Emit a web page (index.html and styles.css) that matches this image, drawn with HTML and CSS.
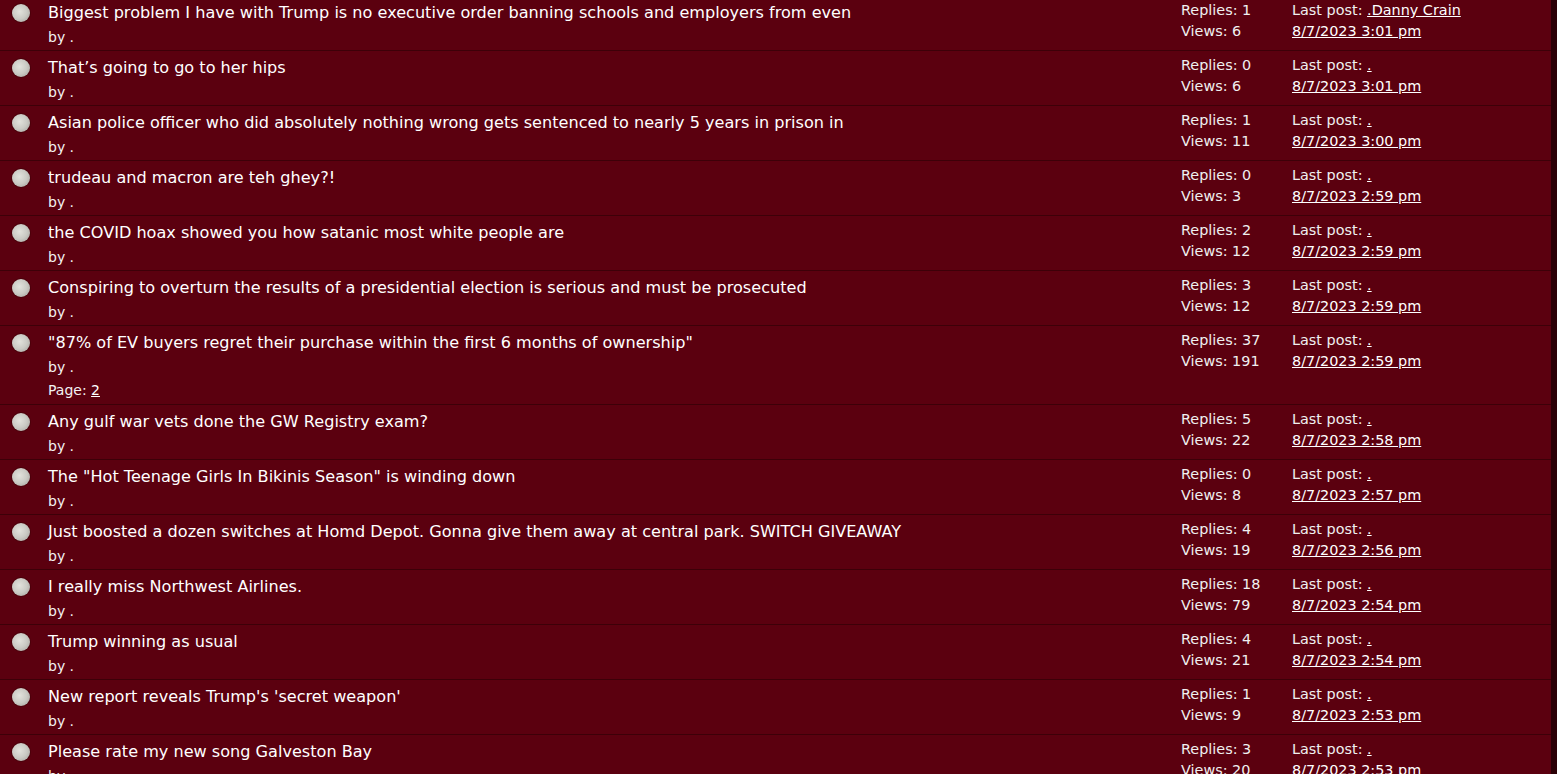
FILE: index.html
```html
<!DOCTYPE html>
<html lang="en">
<head>
    <meta charset="UTF-8">
    <title>Forum topics</title>
    <link rel="stylesheet" href="styles.css">
</head>
<body>
    <div class="page">
        <ul class="topics">
            <li class="topic">
                <span class="dot"></span>
                <div class="subject">
                    <a class="title" href="#">Biggest problem I have with Trump is no executive order banning schools and employers from even</a>
                    <div class="by">by .</div>
                </div>
                <div class="stats"><div>Replies: 1</div><div>Views: 6</div></div>
                <div class="last">
                    <div>Last post: <a href="#">.Danny Crain</a></div>
                    <div><a href="#">8/7/2023 3:01 pm</a></div>
                </div>
            </li>
            <li class="topic">
                <span class="dot"></span>
                <div class="subject">
                    <a class="title" href="#">That’s going to go to her hips</a>
                    <div class="by">by .</div>
                </div>
                <div class="stats"><div>Replies: 0</div><div>Views: 6</div></div>
                <div class="last">
                    <div>Last post: <a href="#">.</a></div>
                    <div><a href="#">8/7/2023 3:01 pm</a></div>
                </div>
            </li>
            <li class="topic">
                <span class="dot"></span>
                <div class="subject">
                    <a class="title" href="#">Asian police officer who did absolutely nothing wrong gets sentenced to nearly 5 years in prison in</a>
                    <div class="by">by .</div>
                </div>
                <div class="stats"><div>Replies: 1</div><div>Views: 11</div></div>
                <div class="last">
                    <div>Last post: <a href="#">.</a></div>
                    <div><a href="#">8/7/2023 3:00 pm</a></div>
                </div>
            </li>
            <li class="topic">
                <span class="dot"></span>
                <div class="subject">
                    <a class="title" href="#">trudeau and macron are teh ghey?!</a>
                    <div class="by">by .</div>
                </div>
                <div class="stats"><div>Replies: 0</div><div>Views: 3</div></div>
                <div class="last">
                    <div>Last post: <a href="#">.</a></div>
                    <div><a href="#">8/7/2023 2:59 pm</a></div>
                </div>
            </li>
            <li class="topic">
                <span class="dot"></span>
                <div class="subject">
                    <a class="title" href="#">the COVID hoax showed you how satanic most white people are</a>
                    <div class="by">by .</div>
                </div>
                <div class="stats"><div>Replies: 2</div><div>Views: 12</div></div>
                <div class="last">
                    <div>Last post: <a href="#">.</a></div>
                    <div><a href="#">8/7/2023 2:59 pm</a></div>
                </div>
            </li>
            <li class="topic">
                <span class="dot"></span>
                <div class="subject">
                    <a class="title" href="#">Conspiring to overturn the results of a presidential election is serious and must be prosecuted</a>
                    <div class="by">by .</div>
                </div>
                <div class="stats"><div>Replies: 3</div><div>Views: 12</div></div>
                <div class="last">
                    <div>Last post: <a href="#">.</a></div>
                    <div><a href="#">8/7/2023 2:59 pm</a></div>
                </div>
            </li>
            <li class="topic">
                <span class="dot"></span>
                <div class="subject">
                    <a class="title" href="#">"87% of EV buyers regret their purchase within the first 6 months of ownership"</a>
                    <div class="by">by .</div>
                    <div class="pages">Page: <a href="#">2</a></div>
                </div>
                <div class="stats"><div>Replies: 37</div><div>Views: 191</div></div>
                <div class="last">
                    <div>Last post: <a href="#">.</a></div>
                    <div><a href="#">8/7/2023 2:59 pm</a></div>
                </div>
            </li>
            <li class="topic">
                <span class="dot"></span>
                <div class="subject">
                    <a class="title" href="#">Any gulf war vets done the GW Registry exam?</a>
                    <div class="by">by .</div>
                </div>
                <div class="stats"><div>Replies: 5</div><div>Views: 22</div></div>
                <div class="last">
                    <div>Last post: <a href="#">.</a></div>
                    <div><a href="#">8/7/2023 2:58 pm</a></div>
                </div>
            </li>
            <li class="topic">
                <span class="dot"></span>
                <div class="subject">
                    <a class="title" href="#">The "Hot Teenage Girls In Bikinis Season" is winding down</a>
                    <div class="by">by .</div>
                </div>
                <div class="stats"><div>Replies: 0</div><div>Views: 8</div></div>
                <div class="last">
                    <div>Last post: <a href="#">.</a></div>
                    <div><a href="#">8/7/2023 2:57 pm</a></div>
                </div>
            </li>
            <li class="topic">
                <span class="dot"></span>
                <div class="subject">
                    <a class="title" href="#">Just boosted a dozen switches at Homd Depot. Gonna give them away at central park. SWITCH GIVEAWAY</a>
                    <div class="by">by .</div>
                </div>
                <div class="stats"><div>Replies: 4</div><div>Views: 19</div></div>
                <div class="last">
                    <div>Last post: <a href="#">.</a></div>
                    <div><a href="#">8/7/2023 2:56 pm</a></div>
                </div>
            </li>
            <li class="topic">
                <span class="dot"></span>
                <div class="subject">
                    <a class="title" href="#">I really miss Northwest Airlines.</a>
                    <div class="by">by .</div>
                </div>
                <div class="stats"><div>Replies: 18</div><div>Views: 79</div></div>
                <div class="last">
                    <div>Last post: <a href="#">.</a></div>
                    <div><a href="#">8/7/2023 2:54 pm</a></div>
                </div>
            </li>
            <li class="topic">
                <span class="dot"></span>
                <div class="subject">
                    <a class="title" href="#">Trump winning as usual</a>
                    <div class="by">by .</div>
                </div>
                <div class="stats"><div>Replies: 4</div><div>Views: 21</div></div>
                <div class="last">
                    <div>Last post: <a href="#">.</a></div>
                    <div><a href="#">8/7/2023 2:54 pm</a></div>
                </div>
            </li>
            <li class="topic">
                <span class="dot"></span>
                <div class="subject">
                    <a class="title" href="#">New report reveals Trump's 'secret weapon'</a>
                    <div class="by">by .</div>
                </div>
                <div class="stats"><div>Replies: 1</div><div>Views: 9</div></div>
                <div class="last">
                    <div>Last post: <a href="#">.</a></div>
                    <div><a href="#">8/7/2023 2:53 pm</a></div>
                </div>
            </li>
            <li class="topic">
                <span class="dot"></span>
                <div class="subject">
                    <a class="title" href="#">Please rate my new song Galveston Bay</a>
                    <div class="by">by .</div>
                </div>
                <div class="stats"><div>Replies: 3</div><div>Views: 20</div></div>
                <div class="last">
                    <div>Last post: <a href="#">.</a></div>
                    <div><a href="#">8/7/2023 2:53 pm</a></div>
                </div>
            </li>
        </ul>
    </div>
</body>
</html>
```

FILE: styles.css
```css
html, body {
    margin: 0;
    height: 100%;
    overflow: hidden;
}

body {
    background-color: #2b0006;
    font-family: "DejaVu Sans", Verdana, sans-serif;
    color: #f2f2f2;
}

.page {
    margin-right: 6px;
    background-color: #5b000f;
    min-height: 100%;
}

.topics {
    list-style: none;
    margin: -4px 0 0 0;
    padding: 0;
}

.topic {
    display: grid;
    grid-template-columns: 48px 1fr 111px 259px;
    border-bottom: 1px solid #3d0008;
}

.dot {
    width: 18px;
    height: 18px;
    margin: 8px 0 0 12px;
    border-radius: 50%;
    background: radial-gradient(circle at 42% 42%, #e2e2dc 0%, #cacac4 50%, #9c9c96 100%);
    box-shadow: 0 0 0 1px rgba(40, 0, 0, 0.3);
}

.subject {
    padding-top: 6px;
}

.title {
    display: block;
    line-height: 22px;
    font-size: 16.1px;
    color: #ffffff;
    text-decoration: none;
}

.by {
    line-height: 26px;
    font-size: 14px;
}

.pages {
    line-height: 20px;
    padding-bottom: 4px;
    font-size: 14px;
}

.stats, .last {
    padding-top: 4px;
    font-size: 14.4px;
    line-height: 21px;
    color: #f0f0f0;
}

.last a, .pages a {
    color: #ffffff;
}
```
